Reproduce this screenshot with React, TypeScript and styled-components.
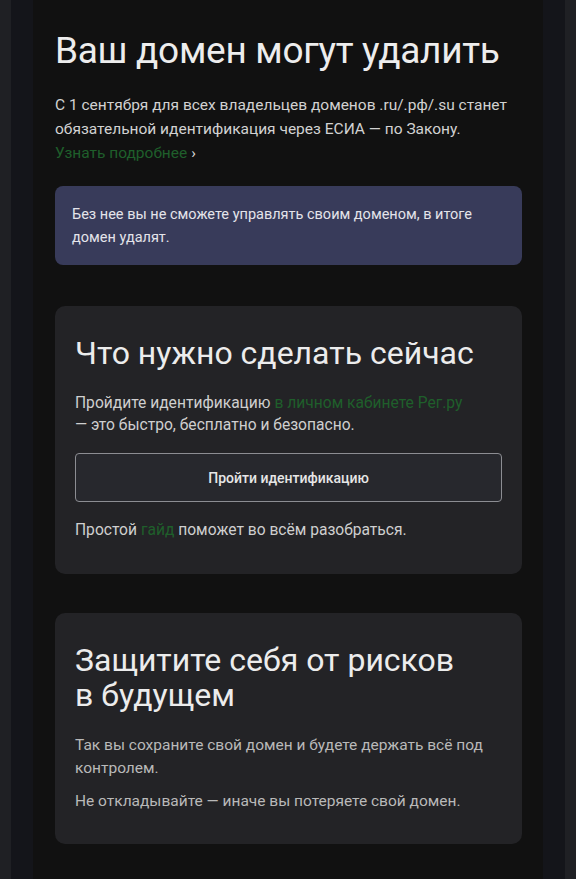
import React from "react";
import styled, { createGlobalStyle } from "styled-components";

const GlobalStyle = createGlobalStyle`
  html, body {
    margin: 0;
    padding: 0;
    background: #1f2024;
  }
  body {
    font-family: Roboto, "Noto Sans", "Liberation Sans", sans-serif;
    -webkit-font-smoothing: antialiased;
  }
`;

const Frame = styled.div`
  padding: 0 11px;
  min-height: 879px;
  display: flex;
`;

const Gutter = styled.div`
  flex: 1;
  background: #14151a;
  padding: 0 22px;
  display: flex;
`;

const Page = styled.main`
  flex: 1;
  background: #111111;
  padding: 29px 21px 36px 22px;
  display: flex;
  flex-direction: column;
`;

const Title = styled.h1`
  margin: 0;
  font-size: 37px;
  line-height: 44px;
  font-weight: 400;
  color: #ededed;
  letter-spacing: -0.3px;
`;

const Lead = styled.p`
  margin: 20px 0 0;
  font-size: 15.5px;
  line-height: 24px;
  color: #d2d2d2;
`;

const Link = styled.a`
  color: #1f5f2b;
  text-decoration: none;
`;

const Chevron = styled.span`
  color: #d8d8d8;
  margin-left: 4px;
`;

const Notice = styled.div`
  margin-top: 21px;
  background: #383b5a;
  border-radius: 8px;
  padding: 16.5px 17px;
  font-size: 14.5px;
  line-height: 23px;
  color: #e4e4ea;
`;

const Card = styled.section`
  margin-top: 41px;
  background: #232326;
  border-radius: 10px;
  padding: 30px 20px 33px;
  display: flex;
  flex-direction: column;

  & + & {
    margin-top: 39px;
    padding-bottom: 31px;
  }
`;

const CardTitle = styled.h2`
  margin: 0;
  font-size: 32px;
  line-height: 35px;
  font-weight: 400;
  color: #ececec;
`;

const Text = styled.p<{ $top: number }>`
  margin: ${(p) => p.$top}px 0 0;
  font-size: 15.6px;
  line-height: 22px;
  color: #cfcfcf;
`;

const SmallText = styled.p<{ $top: number }>`
  margin: ${(p) => p.$top}px 0 0;
  font-size: 15.5px;
  line-height: 23px;
  color: #b9b9b9;
`;

const Button = styled.button`
  margin-top: 17px;
  height: 49px;
  width: 100%;
  background: #27282d;
  border: 1.5px solid #8c8d92;
  border-radius: 4px;
  color: #e6e6e6;
  font-family: inherit;
  font-size: 14px;
  font-weight: 500;
  cursor: pointer;
`;

const App: React.FC = () => (
  <>
    <GlobalStyle />
    <Frame>
      <Gutter>
        <Page>
          <Title>Ваш домен могут удалить</Title>
          <Lead>
            С 1 сентября для всех владельцев доменов .ru/.рф/.su станет
            обязательной идентификация через ЕСИА — по Закону.
            <br />
            <Link href="#">Узнать подробнее</Link>
            <Chevron>›</Chevron>
          </Lead>
          <Notice>
            Без нее вы не сможете управлять своим доменом, в итоге домен
            удалят.
          </Notice>

          <Card>
            <CardTitle>Что нужно сделать сейчас</CardTitle>
            <Text $top={21}>
              Пройдите идентификацию{" "}
              <Link href="#">в личном кабинете Рег.ру</Link>
              <br />— это быстро, бесплатно и безопасно.
            </Text>
            <Button>Пройти идентификацию</Button>
            <Text $top={17}>
              Простой <Link href="#">гайд</Link> поможет во всём разобраться.
            </Text>
          </Card>

          <Card>
            <CardTitle>
              Защитите себя от рисков
              <br />в будущем
            </CardTitle>
            <SmallText $top={21}>
              Так вы сохраните свой домен и будете держать всё под контролем.
            </SmallText>
            <SmallText $top={10}>
              Не откладывайте — иначе вы потеряете свой домен.
            </SmallText>
          </Card>
        </Page>
      </Gutter>
    </Frame>
  </>
);

export default App;
